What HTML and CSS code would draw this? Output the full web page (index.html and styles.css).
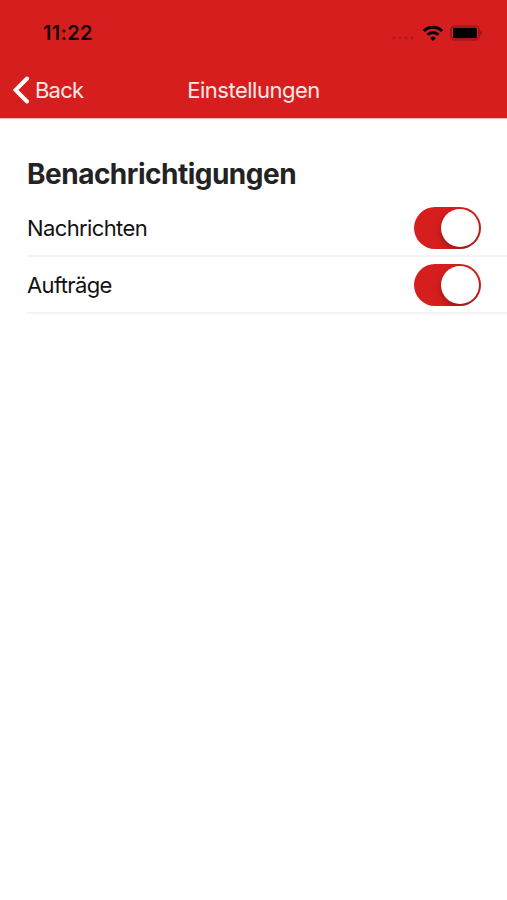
FILE: index.html
```html
<!DOCTYPE html>
<html lang="de">
  <head>
    <meta charset="utf-8" />
    <meta name="viewport" content="width=device-width, initial-scale=1.0" />
    <title>Einstellungen</title>
    <link rel="stylesheet" href="styles.css">
  </head>

  <body>
    <header class="header">
      <div class="status-bar">
        <span class="time">11:22</span>
        <div class="status-icons">
          <svg class="signal" width="24" height="4" viewBox="0 0 24 4">
            <circle cx="3" cy="2" r="1.6" />
            <circle cx="9" cy="2" r="1.6" />
            <circle cx="15" cy="2" r="1.6" />
            <circle cx="21" cy="2" r="1.6" />
          </svg>
          <svg class="wifi" width="22" height="17" viewBox="0 0 22 17">
            <path d="M1.8 6a13 13 0 0 1 18.4 0M5.5 9.8a7.8 7.8 0 0 1 11 0" fill="none" stroke="#000" stroke-width="2.9" />
            <path d="M11 16l-2.5-2.4q-.5-.8.4-1.4a3.6 3.6 0 0 1 4.2 0q.9.6.4 1.4z" />
          </svg>
          <svg class="battery" width="33" height="16" viewBox="0 0 33 16">
            <rect x="1" y="1" width="28" height="14" rx="3.6" fill="none" stroke="#8b1214" stroke-width="1.2" />
            <rect x="3" y="2.7" width="24" height="10.6" rx="1.6" />
            <path d="M30.5 5.8q1.6.6 1.6 2.2t-1.6 2.2z" fill="#7d1012" />
          </svg>
        </div>
      </div>
      <nav class="nav-bar">
        <a class="back" href="#">
          <svg width="17" height="28" viewBox="0 0 17 28">
            <path d="M15 2.5L3.6 14 15 25.5" fill="none" stroke="#fff" stroke-width="4" stroke-linecap="round" />
          </svg>
          <span class="back-label">Back</span>
        </a>
        <span class="title">Einstellungen</span>
      </nav>
    </header>

    <main class="content">
      <h1 class="heading">Benachrichtigungen</h1>
      <label class="row">
        <span class="row-label">Nachrichten</span>
        <input class="toggle" type="checkbox" checked />
      </label>
      <label class="row">
        <span class="row-label">Aufträge</span>
        <input class="toggle" type="checkbox" checked />
      </label>
    </main>
  </body>
</html>
```

FILE: styles.css
```css
* {
  box-sizing: border-box;
}

body {
  margin: 0;
  background-color: #fff;
  color: #111;
  font-family: Inter, "Liberation Sans", sans-serif;
  font-size: 22px;
}

.header {
  height: 119px;
  border-bottom: 1px solid #f3b5b5;
  background-color: #d71e1e;
}

.status-bar {
  display: flex;
  justify-content: space-between;
  height: 62px;
  padding: 20px 24px 0 43px;
}

.time {
  color: #160202;
  font-size: 20px;
  font-weight: 600;
  line-height: 26px;
  letter-spacing: 0.3px;
}

.status-icons {
  display: flex;
  align-items: center;
  height: 26px;
}

.signal {
  margin: 10px 7px 0 0;
  fill: #b0191b;
}

.wifi {
  margin-right: 6px;
}

.nav-bar {
  display: grid;
  grid-template-columns: 1fr auto 1fr;
  align-items: center;
  height: 56px;
  padding: 0 12px;
  color: #ffe9e6;
}

.back {
  display: flex;
  align-items: center;
  color: inherit;
  text-decoration: none;
}

.back-label {
  margin-left: 6px;
  letter-spacing: -0.8px;
}

.title {
  letter-spacing: -0.5px;
}

.content {
  padding: 35px 0 0 27px;
}

.heading {
  height: 46px;
  margin: 0;
  color: #232323;
  font-size: 28px;
  font-weight: 700;
  line-height: 40px;
  letter-spacing: -0.5px;
}

.row {
  display: flex;
  align-items: center;
  justify-content: space-between;
  height: 57px;
  padding-right: 26px;
  border-bottom: 2px solid #f3f3f3;
  cursor: pointer;
}

.row-label {
  letter-spacing: -0.62px;
}

/* overflow keeps the knob's shadow inside the track */
.toggle {
  width: 67px;
  height: 42px;
  margin: 0;
  padding: 2px;
  overflow: hidden;
  appearance: none;
  border-radius: 21px;
  background-color: #ddd;
  cursor: pointer;
}

.toggle::before {
  content: "";
  display: block;
  width: 38px;
  height: 38px;
  border-radius: 50%;
  background-color: #fff;
  box-shadow: 0 3px 6px rgba(0, 0, 0, 0.3);
}

.toggle:checked {
  background-color: #d71e1e;
}

.toggle:checked::before {
  margin-left: 25px;
}
```
